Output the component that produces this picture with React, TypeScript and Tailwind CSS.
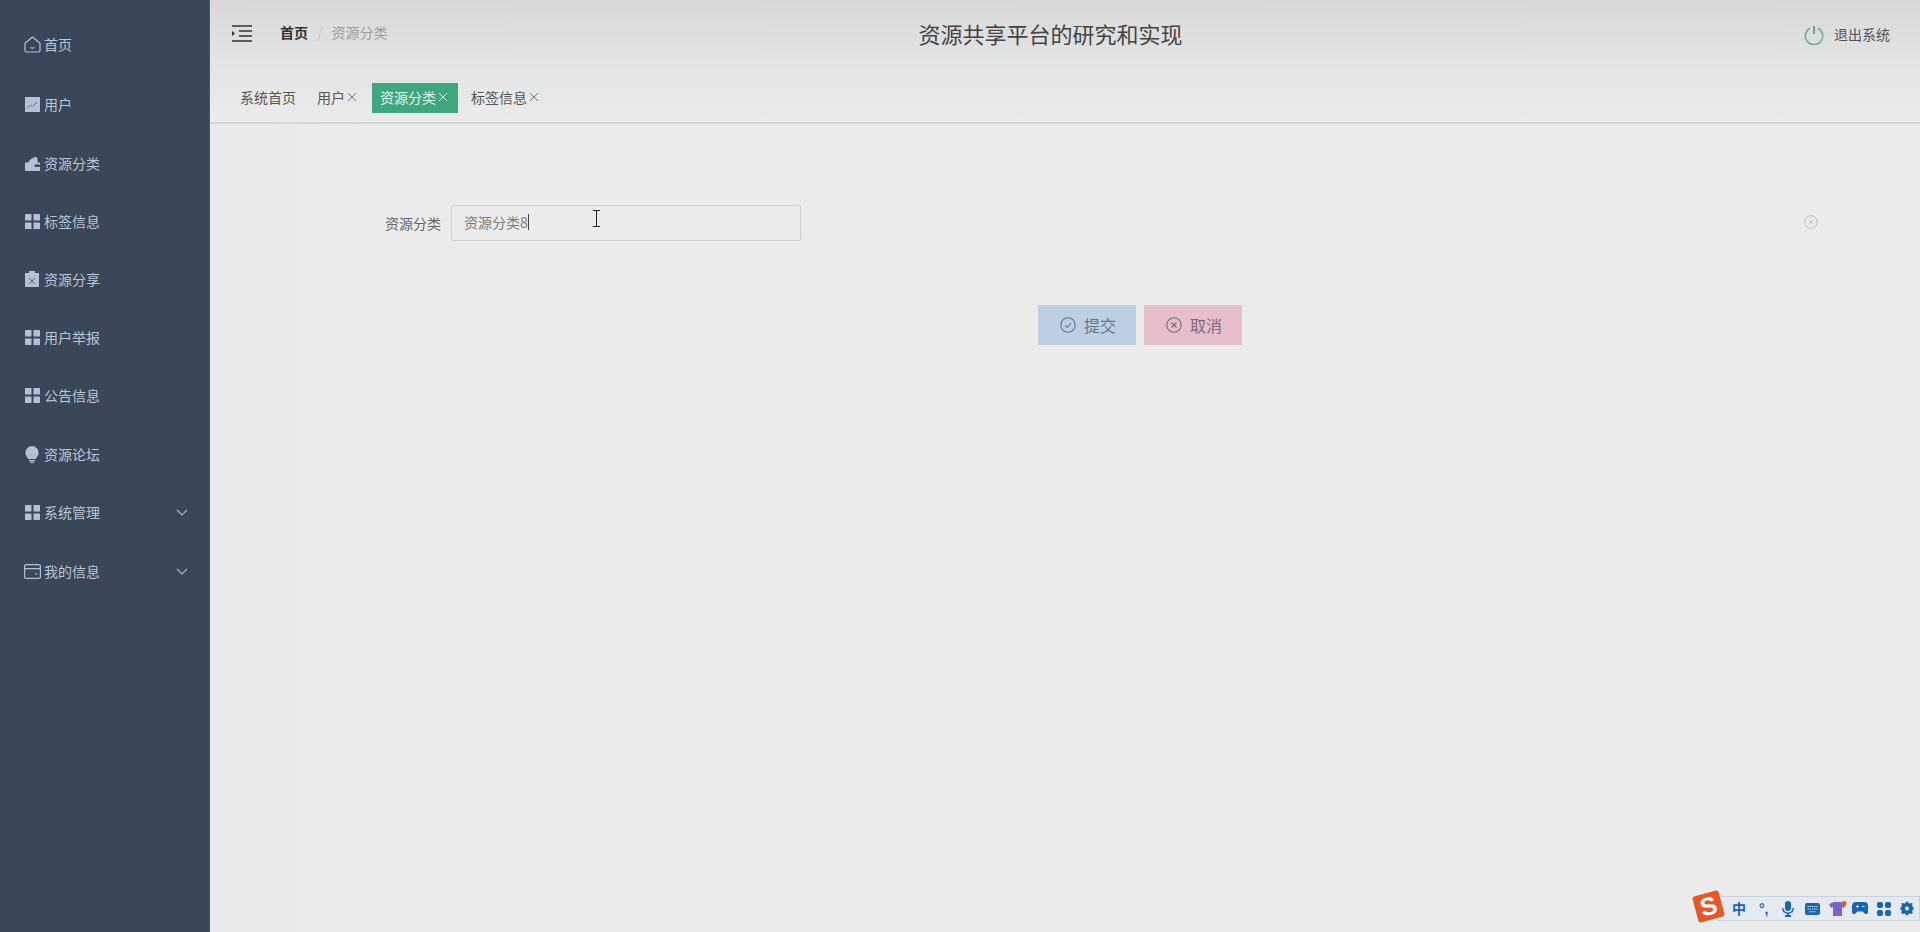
import type { ReactNode } from "react"

const GridIcon = () => (
  <svg viewBox="0 0 15 15" className="h-[15px] w-[15px]" fill="#b4c0d3">
    <rect x="0" y="0" width="6.5" height="6.5" rx="0.5" />
    <rect x="8.5" y="0" width="6.5" height="6.5" rx="0.5" />
    <rect x="0" y="8.5" width="6.5" height="6.5" rx="0.5" />
    <rect x="8.5" y="8.5" width="6.5" height="6.5" rx="0.5" />
  </svg>
)

const HomeIcon = () => (
  <svg viewBox="0 0 17 17" className="h-[17px] w-[17px] shrink-0" fill="none" stroke="#b4c0d3" strokeWidth="1.2">
    <path d="M1 7.2 8.5 1 16 7.2V14.500a1.500 1.500 0 0 1-1.500 1.500h-12A1.500 1.500 0 0 1 1 14.500z" strokeLinejoin="round" />
    <path d="M6.500 11.500q2 1.200 4 0" />
  </svg>
)

const ChartIcon = () => (
  <svg viewBox="0 0 15 15" className="h-[15px] w-[15px]">
    <rect width="15" height="15" fill="#b4c0d3" />
    <path d="M2.500 11 5.500 8l2 1.500L12 5" fill="none" stroke="#65748a" strokeWidth="1" />
  </svg>
)

const WalletIcon = () => (
  <svg viewBox="0 0 15 15" className="h-[15px] w-[15px]" fill="#b4c0d3">
    <path d="M0 6.500h3C4.500 4 7 1.500 10.500 1c1.500 0 2 .8 2 2v3.500H15V15H0z" />
    <rect x="9.500" y="8.500" width="5.500" height="2.400" rx="1" fill="#3a4759" />
  </svg>
)

const ClipIcon = () => (
  <svg viewBox="0 0 14 16" className="h-[16px] w-[14px]">
    <path d="M0 2h4V0h6v2h4v14H0z" fill="#b4c0d3" />
    <path d="m4 7 6 6m0-6-6 6" stroke="#5a697f" strokeWidth="1" />
  </svg>
)

const BulbIcon = () => (
  <svg viewBox="0 0 14 17" className="h-[17px] w-[14px]" fill="#b4c0d3">
    <path d="M7 0a6.600 6.600 0 0 1 6.600 6.600c0 2.800-1.800 4.400-2.800 6.400H3.200C2.200 11 .4 9.400.4 6.600A6.600 6.600 0 0 1 7 0z" />
    <rect x="4" y="14" width="6" height="1.200" />
    <rect x="5" y="15.800" width="4" height="1.200" />
  </svg>
)

const CardIcon = () => (
  <svg viewBox="0 0 17 15" className="h-[15px] w-[17px] shrink-0" fill="none" stroke="#b4c0d3" strokeWidth="1.2">
    <rect x="0.600" y="0.600" width="15.800" height="13.800" rx="1.500" />
    <path d="M.6 4.600h15.800M11 10h2.500" />
  </svg>
)

const Chevron = () => (
  <svg viewBox="0 0 12 7" className="h-[7px] w-[12px]" fill="none" stroke="#aab5c6" strokeWidth="1.2">
    <path d="m1 1 5 5 5-5" />
  </svg>
)

const CircleCheck = () => (
  <svg viewBox="0 0 16 16" className="h-[16px] w-[16px]" fill="none" stroke="#66758c" strokeWidth="1.1">
    <circle cx="8" cy="8" r="7.200" />
    <path d="m5 8.300 2.200 2.200L11.200 6" />
  </svg>
)

const CircleX = ({ color, size }: { color: string; size: string }) => (
  <svg viewBox="0 0 16 16" className={size} fill="none" stroke={color} strokeWidth="1.1">
    <circle cx="8" cy="8" r="7.200" />
    <path d="m5.500 5.500 5 5m0-5-5 5" />
  </svg>
)

const navItems: { label: string; icon: ReactNode; y: string; arrow?: boolean }[] = [
  { label: "首页", icon: <HomeIcon />, y: "h-[59px]" },
  { label: "用户", icon: <ChartIcon />, y: "h-[60px]" },
  { label: "资源分类", icon: <WalletIcon />, y: "h-[58px]" },
  { label: "标签信息", icon: <GridIcon />, y: "h-[58px]" },
  { label: "资源分享", icon: <ClipIcon />, y: "h-[58px]" },
  { label: "用户举报", icon: <GridIcon />, y: "h-[58px]" },
  { label: "公告信息", icon: <GridIcon />, y: "h-[59px]" },
  { label: "资源论坛", icon: <BulbIcon />, y: "h-[58px]" },
  { label: "系统管理", icon: <GridIcon />, y: "h-[58px]", arrow: true },
  { label: "我的信息", icon: <CardIcon />, y: "h-[61px]", arrow: true },
]

function Sidebar() {
  return (
    <aside className="flex h-[932px] w-[210px] shrink-0 flex-col border-r border-[#4a5360] bg-[#3a4759] pt-[15px]">
      {navItems.map((item) => (
        <div key={item.label} className={`flex items-center pl-[24px] pr-[21px] text-[14px] text-[#bcc6d4] ${item.y}`}>
          <span className="mr-[4px] flex w-[16px] items-center justify-center">{item.icon}</span>
          <span>{item.label}</span>
          {item.arrow && (
            <span className="ml-auto">
              <Chevron />
            </span>
          )}
        </div>
      ))}
    </aside>
  )
}

const TabClose = ({ color }: { color: string }) => (
  <svg viewBox="0 0 10 10" className="ml-[2px] h-[10px] w-[10px]" fill="none" stroke={color} strokeWidth="1">
    <path d="m1 1 8 8m0-8-8 8" />
  </svg>
)

function TopBar() {
  return (
    <div className="h-[124px] border-b-2 border-[#d5d6d6] bg-gradient-to-b from-[#d8d8d8] via-[#e4e5e5] via-60% to-[#ebebeb]">
      <div className="flex h-[67px] items-center pl-[22px] pr-[30px]">
        <svg viewBox="0 0 20 17" className="h-[17px] w-[20px]" fill="none" stroke="#333" strokeWidth="1.3">
          <path d="M0 1h20M7 6h13M7 11h13M0 16h20" />
          <path d="M0 6v5l3-2.500z" fill="#333" stroke="none" />
        </svg>
        <div className="ml-[28px] flex items-center pb-[2px] text-[14px]">
          <span className="font-bold text-[#303133]">首页</span>
          <span className="mx-[9px] text-[#c6c6c6]">/</span>
          <span className="text-[#9c9c9c]">资源分类</span>
        </div>
        <h1 className="ml-[531px] text-[22px] font-normal text-[#444]">资源共享平台的研究和实现</h1>
        <div className="ml-auto flex translate-y-[1px] items-center text-[14px] text-[#555]">
          <svg viewBox="0 0 20 20" className="mr-[10px] h-[20px] w-[20px]" fill="none" stroke="#6fb09c" strokeWidth="1.6">
            <path d="M6 3.200a8.700 8.700 0 1 0 8 0" />
            <path d="M10 1v8" stroke="#4f9a85" />
          </svg>
          退出系统
        </div>
      </div>
      <div className="mt-[16px] flex h-[30px] items-center pl-[30px] text-[14px] text-[#555]">
        <span className="pb-[2px]">系统首页</span>
        <span className="ml-[21px] flex items-center pb-[2px]">
          用户
          <TabClose color="#777" />
        </span>
        <span className="ml-[15px] flex h-[30px] items-center bg-[#3fa77e] pb-[2px] pl-[8px] pr-[10px] text-[#e6f2ec]">
          资源分类
          <TabClose color="#e6f2ec" />
        </span>
        <span className="ml-[13px] flex items-center pb-[2px]">
          标签信息
          <TabClose color="#777" />
        </span>
      </div>
    </div>
  )
}

const TextCursor = () => (
  <svg viewBox="0 0 9 17" className="absolute left-[140px] top-[4px] h-[17px] w-[9px]" fill="none" stroke="#222" strokeWidth="1">
    <path d="M1 .5h7M4.500.5v16M1 16.500h7" />
  </svg>
)

function ImeBar() {
  return (
    <div className="absolute bottom-[11px] right-0 flex items-center">
      <div className="relative z-10 -mt-[4px] flex h-[27px] w-[27px] -rotate-[15deg] items-center justify-center rounded-[3px] bg-[#e4592a] font-['Liberation_Sans',sans-serif] text-[25px] font-bold leading-none text-white">
        S
      </div>
      <div className="-ml-[5px] flex h-[25px] w-[203px] items-center border border-[#c9d3de] bg-[#e6e9ee] pl-[14px]">
        <span className="w-[27px] pb-[2px] font-['Noto_Sans_CJK_SC',sans-serif] text-[14px] font-bold leading-none text-[#1766b5]">中</span>
        <span className="w-[23px] font-['Liberation_Sans',sans-serif] text-[14px] font-bold leading-none text-[#1766b5]">°,</span>
        <svg viewBox="0 0 12 16" className="mr-[11px] h-[16px] w-[12px]" fill="#1766b5">
          <rect x="3" y="0" width="6" height="10" rx="3" />
          <path d="M0 7h1.400a4.600 4.600 0 0 0 9.200 0H12a6 6 0 0 1-5 5.800V14h2v2H3v-2h2v-1.200A6 6 0 0 1 0 7z" />
        </svg>
        <svg viewBox="0 0 15 12" className="mr-[9px] h-[12px] w-[15px]">
          <rect width="15" height="12" rx="2" fill="#1766b5" />
          <path d="M2.500 3.500h10M2.500 6h10M4 8.800h7" stroke="#dfe8f2" strokeWidth="1.100" strokeDasharray="1.400 0.800" />
        </svg>
        <svg viewBox="0 0 18 16" className="mr-[5px] h-[16px] w-[18px]">
          <path d="M0 3 5 1h7l5 2-2 4-2-1v9H4V6L2 7z" fill="#7a62c9" />
          <circle cx="15" cy="2.500" r="2.500" fill="#e4592a" />
        </svg>
        <svg viewBox="0 0 16 13" className="mr-[9px] h-[13px] w-[16px]" fill="#1766b5">
          <path d="M4 0h8a4 4 0 0 1 4 4v6a2 2 0 0 1-3.400 1.500L10.500 9.500h-5l-2.100 2A2 2 0 0 1 0 10V4a4 4 0 0 1 4-4z" />
          <path d="M4 4.500h3M5.500 3v3M10 4.500h2.500" stroke="#e6e9ee" strokeWidth="1" />
        </svg>
        <svg viewBox="0 0 14 14" className="mr-[9px] h-[14px] w-[14px]" fill="#1766b5">
          <rect width="6" height="6" rx="2" />
          <rect x="8" width="6" height="6" rx="2" />
          <rect y="8" width="6" height="6" rx="2" />
          <rect x="8" y="8" width="6" height="6" rx="2" />
        </svg>
        <svg viewBox="0 0 14 15" className="h-[15px] w-[14px]" fill="#1766b5">
          <path d="M7 0l2 2.400 3.500-.4-.3 3.200L14 7.500l-1.800 2.300.3 3.200-3.500-.4L7 15l-2-2.400-3.500.4.300-3.200L0 7.500l1.800-2.300L1.500 2 5 2.400z" />
          <circle cx="7" cy="7.500" r="2" fill="#e6e9ee" />
        </svg>
      </div>
    </div>
  )
}

export default function App() {
  return (
    <div className="relative flex h-[932px] w-[1920px] overflow-hidden bg-[#ebebeb] font-['Noto_Sans_CJK_SC','Liberation_Sans',sans-serif]">
      <Sidebar />
      <main className="flex min-w-0 flex-1 flex-col">
        <TopBar />
        <form className="flex-1 bg-gradient-to-r from-[#e8eaeb] to-[#ebebeb] to-10%">
          <div className="mt-[81px] flex items-center pl-[175px] pr-[102px]">
            <label className="w-[56px] text-[14px] text-[#666]">资源分类</label>
            <div className="relative ml-[10px] flex h-[36px] w-[350px] items-center rounded-[2px] border border-[#cfcfcf] pb-[2px] pl-[12px] text-[14px] text-[#7c7c7c]">
              资源分类8
              <span className="h-[16px] w-px bg-[#444]" />
              <TextCursor />
            </div>
            <span className="ml-auto -translate-y-[1px]">
              <CircleX color="#bcbcbc" size="h-[14px] w-[14px]" />
            </span>
          </div>
          <div className="mt-[64px] flex gap-[8px] pl-[828px]">
            <button type="button" className="flex h-[40px] w-[98px] items-center justify-center gap-[8px] bg-[#bdcfe2] pb-[1px] pl-[2px] text-[16px] text-[#66758c]">
              <CircleCheck />
              提交
            </button>
            <button type="button" className="flex h-[40px] w-[98px] items-center justify-center gap-[8px] bg-[#e6bfcb] pb-[1px] pl-[2px] text-[16px] text-[#7a6a78]">
              <CircleX color="#7a6a78" size="h-[16px] w-[16px]" />
              取消
            </button>
          </div>
        </form>
      </main>
      <ImeBar />
    </div>
  )
}
